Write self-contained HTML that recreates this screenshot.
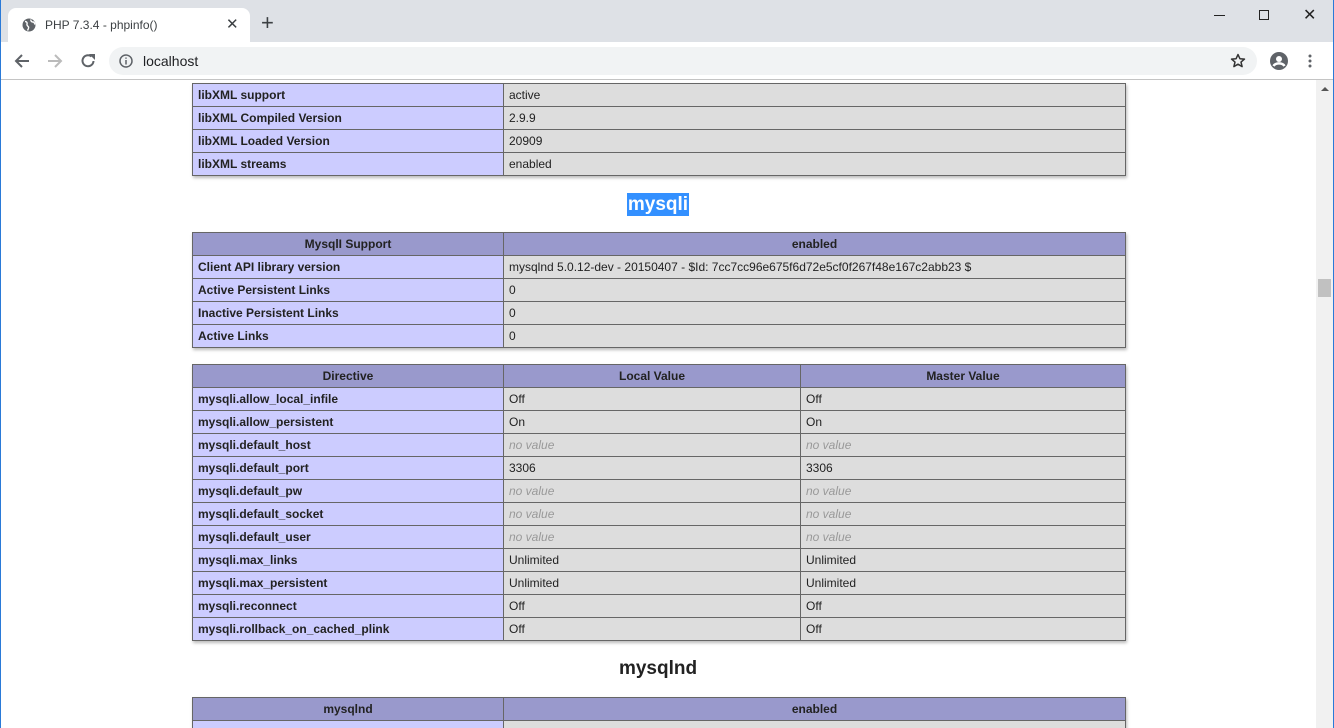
<!DOCTYPE html>
<html style="overflow:hidden;height:728px"><head><meta charset="utf-8"><style>
*{margin:0;padding:0;box-sizing:border-box}
body{width:1334px;height:728px;overflow:hidden;background:#fff;font-family:"Liberation Sans",Arial,sans-serif;position:relative}
.tabs{position:absolute;left:0;top:0;width:1334px;height:42px;background:#dee1e6}
.tab{position:absolute;left:8px;top:8px;width:242px;height:34px;background:#fff;border-radius:8px 8px 0 0}
.tab .t{position:absolute;left:37px;top:10px;font-size:12px;color:#3c4043}
.bar{position:absolute;left:0;top:42px;width:1334px;height:38px;background:#fff;border-bottom:1px solid #c4c4c4}
.omni{position:absolute;left:109px;top:5px;width:1148px;height:28px;background:#f1f3f4;border-radius:14px}
.omni span{position:absolute;left:34px;top:6px;font-size:14px;color:#202124}
.edge{position:absolute;top:0;width:1px;height:728px;background:#2a7ad8}
.sb{position:absolute;left:1316px;top:80px;width:17px;height:648px;background:#f1f1f1}
.thumb{position:absolute;left:2px;top:199px;width:13px;height:18px;background:#c1c1c1}
.g{position:absolute;left:192px;width:934px;background:#666;display:grid;gap:1px;padding:1px;grid-auto-rows:22px;box-shadow:1px 2px 3px #bbb;font-size:12px;color:#222}
.g2{grid-template-columns:310px 621px}
.g3{grid-template-columns:310px 296px 324px}
.g div{padding:0 5px;line-height:22px;white-space:nowrap;overflow:hidden}
.e{background:#ccf;font-weight:bold}
.v{background:#ddd}
.h{background:#99c;font-weight:bold;text-align:center}
.nv{color:#999;font-style:italic}
h2{position:absolute;font-size:19px;font-weight:bold;color:#222;left:0;width:1316px;text-align:center}
.sel{background:#3390ff;color:#fff;padding:1px 1px}
</style></head><body>
<div class="tabs">
<div class="tab">
<svg style="position:absolute;left:14px;top:10px" width="14" height="14" viewBox="0 0 14 14"><circle cx="7" cy="7" r="6.5" fill="#5f6368"/><path d="M3 3.5c1.5 0 2.5 1 2 2.5s1 2 1.5 3-.5 2.5-1 3.5M9 1.5c-.5 1.5.5 2.5 2 2.5s1.5 1.5 2 2.5" stroke="#fff" stroke-width="1.4" fill="none"/></svg>
<span class="t">PHP 7.3.4 - phpinfo()</span>
<span style="position:absolute;left:218px;top:7px;font-size:15px;color:#3c4043">✕</span>
</div>
<span style="position:absolute;left:261px;top:13px;font-size:22px;color:#3c4043;line-height:20px">+</span>
<div style="position:absolute;left:1214px;top:15px;width:11px;height:1px;background:#222"></div>
<div style="position:absolute;left:1259px;top:10px;width:10px;height:10px;border:1px solid #222"></div>
<span style="position:absolute;left:1303px;top:5px;font-size:16px;color:#222">✕</span>
</div>
<div class="bar">
<svg style="position:absolute;left:13px;top:10px" width="18" height="18" viewBox="0 0 18 18"><path d="M16 9H3M9 3L3 9l6 6" stroke="#5f6368" stroke-width="2" fill="none"/></svg>
<svg style="position:absolute;left:46px;top:10px" width="18" height="18" viewBox="0 0 18 18"><path d="M2 9h13M9 3l6 6-6 6" stroke="#bbb" stroke-width="2" fill="none"/></svg>
<svg style="position:absolute;left:79px;top:10px" width="18" height="18" viewBox="0 0 18 18"><path d="M14.5 9A5.5 5.5 0 1 1 12.5 4.5" stroke="#5f6368" stroke-width="2" fill="none"/><path d="M10 2h6v6z" fill="#5f6368"/></svg>
<div class="omni">
<svg style="position:absolute;left:10px;top:7px" width="14" height="14" viewBox="0 0 14 14"><circle cx="7" cy="7" r="6" stroke="#5f6368" stroke-width="1.5" fill="none"/><path d="M7 6v4.5M7 3.5v1.2" stroke="#5f6368" stroke-width="1.5"/></svg>
<span>localhost</span>
<svg style="position:absolute;left:1121px;top:6px" width="16" height="16" viewBox="0 0 16 16"><path d="M8 1.5l1.9 4.2 4.6.4-3.5 3 1.1 4.5L8 11.2 3.9 13.6 5 9.1 1.5 6.1l4.6-.4z" stroke="#333" stroke-width="1.5" fill="none" stroke-linejoin="round"/></svg>
</div>
<svg style="position:absolute;left:1270px;top:10px" width="18" height="18" viewBox="0 0 18 18"><circle cx="9" cy="9" r="9" fill="#5f6368"/><circle cx="9" cy="7" r="3" fill="#fff"/><path d="M3.5 14c2-3.5 9-3.5 11 0" stroke="#fff" stroke-width="2.5" fill="none"/></svg>
<svg style="position:absolute;left:1308px;top:11px" width="4" height="16"><circle cx="2" cy="3" r="1.5" fill="#5f6368"/><circle cx="2" cy="8" r="1.5" fill="#5f6368"/><circle cx="2" cy="13" r="1.5" fill="#5f6368"/></svg>
</div>
<div class="edge" style="left:0"></div><div class="edge" style="left:1333px"></div>
<div class="sb"><div style="position:absolute;left:5px;top:7px;border:4px solid transparent;border-bottom:4px solid #555;border-top:0"></div><div class="thumb"></div></div>

<div class="g g2" style="top:83px">
<div class="e">libXML support</div><div class="v">active</div>
<div class="e">libXML Compiled Version</div><div class="v">2.9.9</div>
<div class="e">libXML Loaded Version</div><div class="v">20909</div>
<div class="e">libXML streams</div><div class="v">enabled</div>
</div>
<h2 style="top:193px;line-height:23px"><span class="sel">mysqli</span></h2>
<div class="g g2" style="top:232px">
<div class="h">MysqlI Support</div><div class="h">enabled</div>
<div class="e">Client API library version</div><div class="v">mysqlnd 5.0.12-dev - 20150407 - $Id: 7cc7cc96e675f6d72e5cf0f267f48e167c2abb23 $</div>
<div class="e">Active Persistent Links</div><div class="v">0</div>
<div class="e">Inactive Persistent Links</div><div class="v">0</div>
<div class="e">Active Links</div><div class="v">0</div>
</div>
<div class="g g3" style="top:364px">
<div class="h">Directive</div><div class="h">Local Value</div><div class="h">Master Value</div>
<div class="e">mysqli.allow_local_infile</div><div class="v">Off</div><div class="v">Off</div>
<div class="e">mysqli.allow_persistent</div><div class="v">On</div><div class="v">On</div>
<div class="e">mysqli.default_host</div><div class="v nv">no value</div><div class="v nv">no value</div>
<div class="e">mysqli.default_port</div><div class="v">3306</div><div class="v">3306</div>
<div class="e">mysqli.default_pw</div><div class="v nv">no value</div><div class="v nv">no value</div>
<div class="e">mysqli.default_socket</div><div class="v nv">no value</div><div class="v nv">no value</div>
<div class="e">mysqli.default_user</div><div class="v nv">no value</div><div class="v nv">no value</div>
<div class="e">mysqli.max_links</div><div class="v">Unlimited</div><div class="v">Unlimited</div>
<div class="e">mysqli.max_persistent</div><div class="v">Unlimited</div><div class="v">Unlimited</div>
<div class="e">mysqli.reconnect</div><div class="v">Off</div><div class="v">Off</div>
<div class="e">mysqli.rollback_on_cached_plink</div><div class="v">Off</div><div class="v">Off</div>
</div>
<h2 style="top:657px;line-height:23px">mysqlnd</h2>
<div class="g g2" style="top:697px">
<div class="h">mysqlnd</div><div class="h">enabled</div>
<div class="e"></div><div class="v"></div>
</div>
</body></html>
